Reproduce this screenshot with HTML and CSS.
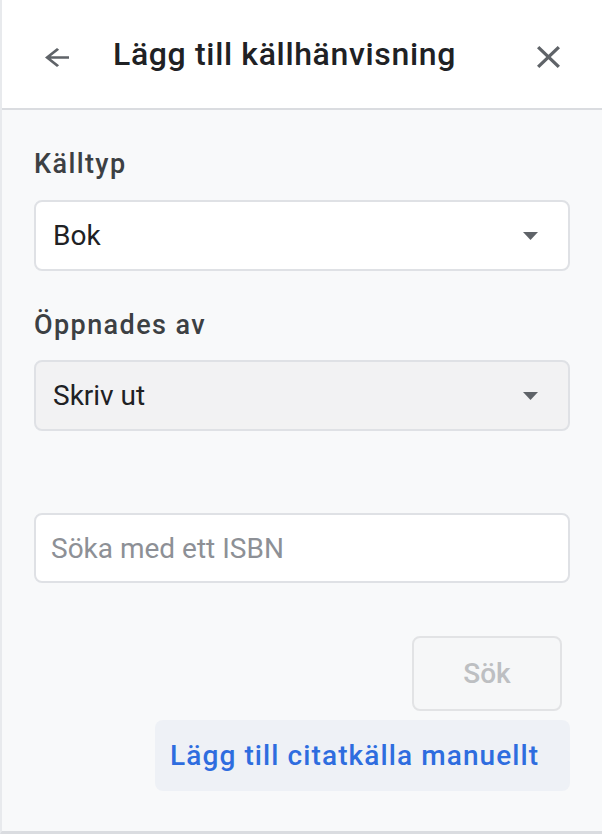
FILE: index.html
```html
<!doctype html>
<html>
<head>
<meta charset="utf-8">
<title>Lägg till källhänvisning</title>
<link rel="stylesheet" href="styles.css">
</head>
<body>
<div class="panel">
    <header class="panel-head">
        <button class="icon-btn back" type="button" aria-label="Tillbaka">
            <svg width="24" height="19" viewBox="4 4 16 16" preserveAspectRatio="none"><path d="M20 11H7.83l5.59-5.59L12 4l-8 8 8 8 1.41-1.41L7.83 13H20v-2z"/></svg>
        </button>
        <h1 class="panel-title">Lägg till källhänvisning</h1>
        <button class="icon-btn close" type="button" aria-label="Stäng">
            <svg width="23" height="22" viewBox="5 5 14 14" preserveAspectRatio="none"><path d="M19 6.41L17.59 5 12 10.59 6.41 5 5 6.41 10.59 12 5 17.59 6.41 19 12 13.41 17.59 19 19 17.59 13.41 12z"/></svg>
        </button>
    </header>

    <main class="panel-body">
        <div class="field-label">Källtyp</div>
        <div class="dropdown">
            <span>Bok</span>
            <svg class="caret" width="15" height="8" viewBox="0 0 10 5" preserveAspectRatio="none"><path d="M0 0l5 5 5-5z"/></svg>
        </div>

        <div class="field-label second">Öppnades av</div>
        <div class="dropdown dropdown-muted">
            <span>Skriv ut</span>
            <svg class="caret" width="15" height="8" viewBox="0 0 10 5" preserveAspectRatio="none"><path d="M0 0l5 5 5-5z"/></svg>
        </div>

        <input class="isbn" type="text" placeholder="Söka med ett ISBN">

        <div class="actions">
            <button class="search-btn" type="button" disabled>Sök</button>
        </div>

        <div class="manual">
            <a href="#">Lägg till citatkälla manuellt</a>
        </div>
    </main>
</div>
</body>
</html>
```

FILE: styles.css
```css
html, body
{
    margin:0;
    padding:0;
}
body
{
    background:#f8f9fa;
    font-family:Roboto, "Liberation Sans", sans-serif;
    color:#202124;
}
.panel
{
    box-sizing:border-box;
    min-height:834px;
    border-left:2px solid #e8eaed;
    border-bottom:3px solid #dadce0;
}

/* header */
.panel-head
{
    display:flex;
    align-items:center;
    height:108px;
    padding:0 42px 0 43px;
    background:#fff;
    border-bottom:2px solid #dadce0;
}
.icon-btn
{
    display:flex;
    padding:0;
    margin-top:6px;
    border:none;
    background:none;
    fill:#5f6368;
    cursor:pointer;
}
.panel-title
{
    flex:1;
    margin:0 0 0 44px;
    font-size:32px;
    line-height:40px;
    font-weight:500;
    letter-spacing:0.65px;
    color:#202124;
}

/* form */
.panel-body
{
    padding:38px 32px 0 32px;
}
.field-label
{
    font-size:27px;
    line-height:32px;
    font-weight:500;
    letter-spacing:1.4px;
    color:#3c4043;
    margin-bottom:20px;
}
.field-label.second
{
    margin-top:38px;
    margin-bottom:19px;
}
.dropdown
{
    display:flex;
    align-items:center;
    justify-content:space-between;
    box-sizing:border-box;
    height:71px;
    padding:0 30px 0 17px;
    background:#fff;
    border:2px solid #dfe1e5;
    border-radius:8px;
    font-size:28px;
    color:#202124;
}
.dropdown-muted
{
    background:#f2f2f3;
}
.caret
{
    fill:#5f6368;
}
.isbn
{
    display:block;
    box-sizing:border-box;
    width:100%;
    height:70px;
    margin-top:82px;
    padding:0 15px;
    background:#fff;
    border:2px solid #dfe1e5;
    border-radius:8px;
    font-family:inherit;
    font-size:28px;
    color:#202124;
    outline:none;
}
.isbn::placeholder
{
    color:#8d9096;
}
.actions
{
    display:flex;
    justify-content:flex-end;
    padding-right:8px;
    margin-top:53px;
}
.search-btn
{
    width:150px;
    height:75px;
    background:#f6f7f8;
    border:2px solid #e2e3e5;
    border-radius:8px;
    font-family:inherit;
    font-size:28px;
    font-weight:500;
    color:#bdbfc2;
}
.manual
{
    display:flex;
    align-items:center;
    height:71px;
    margin:9px 0 0 121px;
    padding-left:15px;
    background:#eef1f6;
    border-radius:8px;
}
.manual a
{
    font-size:28px;
    font-weight:500;
    letter-spacing:1.1px;
    color:#2e6ddf;
    text-decoration:none;
}
```
